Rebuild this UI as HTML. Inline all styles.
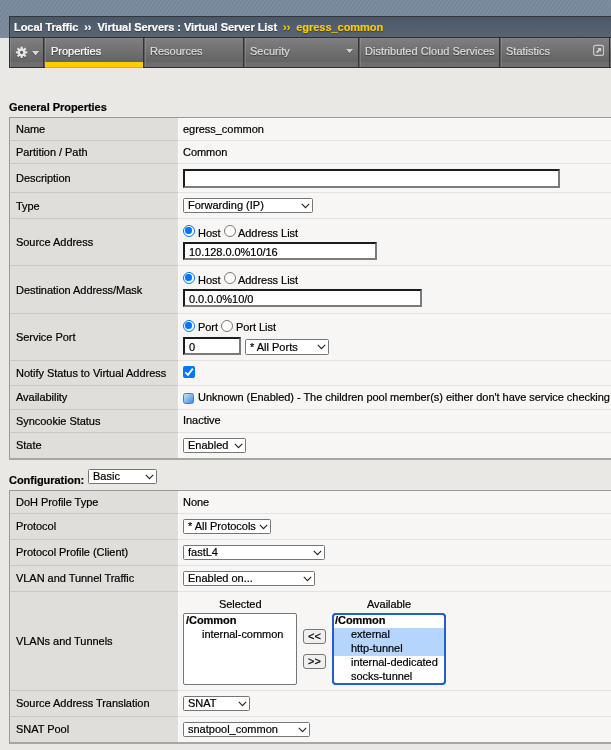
<!DOCTYPE html>
<html lang="en">
<head>
<meta charset="utf-8">
<title>Virtual Server Properties</title>
<style>
html,body{margin:0;padding:0;}
html{background:#e9e8e4;}
body{width:611px;height:750px;overflow:hidden;position:relative;will-change:transform;
  font-family:"Liberation Sans",Arial,Helvetica,sans-serif;font-size:11px;color:#000;line-height:13px;letter-spacing:-0.04px;-webkit-text-stroke:0.2px currentColor;}
*{box-sizing:border-box;}
.topband{position:absolute;left:0;top:0;width:611px;height:38px;
  background-color:#75869a;
  background-image:repeating-linear-gradient(124deg,rgba(255,255,255,0) 0,rgba(255,255,255,.075) 1.6px,rgba(255,255,255,0) 3.25px);}
.crumb{position:absolute;left:9px;top:16px;width:620px;height:22px;border:1px solid #33373c;border-bottom:none;
  background:linear-gradient(rgba(40,50,62,.58),rgba(40,50,62,.5) 40%,rgba(40,50,62,.44));color:#fff;font-weight:bold;white-space:nowrap;letter-spacing:-0.045px;
  padding:4px 0 0 4px;text-shadow:0 1px 1px rgba(0,0,0,.45);}
.crumb .sep{font-weight:bold;padding:0 3px;}
.crumb .cur{color:#ffcc00;}
.crumb .y{color:#ffcc00;}
.tabs{position:absolute;left:9px;top:37px;width:602px;height:31px;border:1px solid #2f2f2f;border-right:none;
  background:linear-gradient(#848484,#7e7e7e 1px,#636363 24.5px,#6e6e6e 24.5px,#6c6c6c);}
.tab{position:absolute;top:0;height:29px;color:#dcdcdc;padding-top:7px;white-space:nowrap;letter-spacing:0;
  border-left:1px solid #5c5c5c;border-right:1px solid #333;text-shadow:0 1px 1px rgba(0,0,0,.5);
  box-shadow:inset 1px 0 0 rgba(255,255,255,.13);
  background:linear-gradient(#848484,#7e7e7e 1px,#636363 24.5px,#6e6e6e 24.5px,#6c6c6c);}
.tab.on{color:#fff;}
.tab.on:after{content:"";position:absolute;left:0;right:0;bottom:-1px;height:6px;background:linear-gradient(#ffcc00,#ffcc00 5px,#d9ad00 5px);}
.hd{position:absolute;left:9px;font-weight:bold;white-space:nowrap;}
.tbl{position:absolute;left:9px;width:640px;border:1px solid #999;border-right:none;border-bottom:2px solid #a6a6a3;background:#f7f6f4;}
.row{position:relative;border-bottom:1px solid #d8d7d3;width:100%;}
.row:last-child{border-bottom:none;}
.lab{position:absolute;left:0;top:0;bottom:0;width:169px;background:#dfdeda;border-right:1px solid #fbfbfa;padding-left:6px;white-space:nowrap;}
.row .lab{border-bottom:0;}
.row{border-bottom-color:#e3e2df;}
.lab:after{content:"";position:absolute;left:0;right:0;bottom:-1px;height:1px;background:#c9c8c4;}
.row:last-child .lab:after{display:none;}
.t{position:absolute;white-space:nowrap;}
.inp{position:absolute;height:18px;background:#fff;border:2px solid;border-color:#1c1c1c #7b7b7b #7b7b7b #1c1c1c;padding:2px 0 0 4px;font-size:11px;line-height:13px;white-space:nowrap;}
.sel{position:absolute;height:15px;background:#fff;border:1px solid #767676;border-radius:1.5px;padding:0 0 0 4px;line-height:13px;white-space:nowrap;letter-spacing:0;}
.sel svg{position:absolute;right:2px;top:3.5px;}
.radio{position:absolute;width:12px;height:12px;border-radius:50%;border:1px solid #767676;background:#fff;}
.radio.on{border:1.5px solid #0075ff;}
.radio.on:after{content:"";position:absolute;left:1.25px;top:1.25px;width:6.5px;height:6.5px;border-radius:50%;background:#0075ff;}
.list{position:absolute;background:#fff;border:1px solid #767676;border-radius:2px;line-height:14px;white-space:nowrap;overflow:hidden;}
.list div{height:14px;line-height:12px;padding-left:18px;}
.list div.g{font-weight:bold;padding-left:2px;}
.list div.s{background:#b5d5fc;}
.btn{position:absolute;width:23px;height:15px;background:#efefef;border:1px solid #767676;border-radius:3px;text-align:center;line-height:13px;font-size:11px;}
</style>
</head>
<body>
<div class="topband"></div>
<div class="crumb">Local Traffic<span class="sep"> ›› </span>Virtual Servers : Virtual Server List<span class="sep y"> ›› </span><span class="cur">egress_common</span></div>
<div class="tabs">
  <div class="tab" style="left:0;width:34px;border-left:none;">
    <svg width="30" height="16" viewBox="0 0 30 16" style="position:absolute;left:4px;top:7px">
      <g transform="translate(7.6 8.3)" fill="rgba(0,0,0,.3)"><circle r="3.9"/><rect x="-1.1" y="-5.7" width="2.2" height="3" transform="rotate(0)"/><rect x="-1.1" y="-5.7" width="2.2" height="3" transform="rotate(45)"/><rect x="-1.1" y="-5.7" width="2.2" height="3" transform="rotate(90)"/><rect x="-1.1" y="-5.7" width="2.2" height="3" transform="rotate(135)"/><rect x="-1.1" y="-5.7" width="2.2" height="3" transform="rotate(180)"/><rect x="-1.1" y="-5.7" width="2.2" height="3" transform="rotate(225)"/><rect x="-1.1" y="-5.7" width="2.2" height="3" transform="rotate(270)"/><rect x="-1.1" y="-5.7" width="2.2" height="3" transform="rotate(315)"/></g>
      <g transform="translate(7.6 7.4)" fill="#e6e6e6"><circle r="3.9"/><rect x="-1.1" y="-5.7" width="2.2" height="3" transform="rotate(0)"/><rect x="-1.1" y="-5.7" width="2.2" height="3" transform="rotate(45)"/><rect x="-1.1" y="-5.7" width="2.2" height="3" transform="rotate(90)"/><rect x="-1.1" y="-5.7" width="2.2" height="3" transform="rotate(135)"/><rect x="-1.1" y="-5.7" width="2.2" height="3" transform="rotate(180)"/><rect x="-1.1" y="-5.7" width="2.2" height="3" transform="rotate(225)"/><rect x="-1.1" y="-5.7" width="2.2" height="3" transform="rotate(270)"/><rect x="-1.1" y="-5.7" width="2.2" height="3" transform="rotate(315)"/></g>
      <circle cx="7.6" cy="7.4" r="1.6" fill="#5f5f5f"/>
      <path d="M18 7 L25.2 7 L21.6 11.4 Z" fill="rgba(0,0,0,.3)"/>
      <path d="M18 6.1 L25.2 6.1 L21.6 10.6 Z" fill="#d9d9d9"/>
    </svg>
  </div>
  <div class="tab on" style="left:34px;width:100px;padding-left:6px;">Properties</div>
  <div class="tab" style="left:134px;width:100px;padding-left:5px;">Resources</div>
  <div class="tab" style="left:234px;width:115px;padding-left:5px;">Security
    <svg width="9" height="6" viewBox="0 0 9 6" style="position:absolute;left:100px;top:11px"><path d="M1 1 L8 1 L4.5 5.2 Z" fill="rgba(0,0,0,.3)"/><path d="M1 0 L8 0 L4.5 4.2 Z" fill="#d0d0d0"/></svg>
  </div>
  <div class="tab" style="left:349px;width:141px;padding-left:5px;">Distributed Cloud Services</div>
  <div class="tab" style="left:490px;width:110px;padding-left:5px;">Statistics
    <svg width="12" height="12" viewBox="0 0 12 12" style="position:absolute;left:91px;top:6px">
      <rect x="1.6" y="1.4" width="10" height="10" rx="2" fill="none" stroke="#c9c9c9" stroke-width="1.2"/>
      <path d="M5.4 3.9 H9.2 V7.7 L8 6.5 L5.3 9.2 L4.1 8 L6.8 5.3 Z" fill="#d6d6d6"/>
    </svg>
  </div>
</div>

<div class="hd" style="top:101px;">General Properties</div>
<div class="tbl" style="top:117px;">
  <div class="row" style="height:23px;"><div class="lab" style="padding-top:5px;">Name</div><div class="t" style="left:173px;top:5px;">egress_common</div></div>
  <div class="row" style="height:23px;"><div class="lab" style="padding-top:5px;">Partition / Path</div><div class="t" style="left:173px;top:5px;">Common</div></div>
  <div class="row" style="height:29px;"><div class="lab" style="padding-top:8px;">Description</div><div class="inp" style="left:173px;top:5px;width:377px;height:19px;"></div></div>
  <div class="row" style="height:26px;"><div class="lab" style="padding-top:7px;">Type</div>
    <div class="sel" style="left:173px;top:5px;width:130px;">Forwarding (IP)<svg width="9" height="6" viewBox="0 0 9 6"><path d="M0.8 0.9 L4.5 4.6 L8.2 0.9" fill="none" stroke="#222" stroke-width="1.1"/></svg></div></div>
  <div class="row" style="height:47px;"><div class="lab" style="padding-top:17px;">Source Address</div>
    <div class="radio on" style="left:173px;top:6px;"></div><div class="t" style="left:188px;top:8px;">Host</div>
    <div class="radio" style="left:214px;top:6px;"></div><div class="t" style="left:228px;top:8px;">Address List</div>
    <div class="inp" style="left:173px;top:23px;width:194px;">10.128.0.0%10/16</div></div>
  <div class="row" style="height:48px;"><div class="lab" style="padding-top:18px;">Destination Address/Mask</div>
    <div class="radio on" style="left:173px;top:6px;"></div><div class="t" style="left:188px;top:8px;">Host</div>
    <div class="radio" style="left:214px;top:6px;"></div><div class="t" style="left:228px;top:8px;">Address List</div>
    <div class="inp" style="left:173px;top:23px;width:239px;">0.0.0.0%10/0</div></div>
  <div class="row" style="height:47px;"><div class="lab" style="padding-top:17px;">Service Port</div>
    <div class="radio on" style="left:173px;top:6px;"></div><div class="t" style="left:188px;top:7px;">Port</div>
    <div class="radio" style="left:211px;top:6px;"></div><div class="t" style="left:226px;top:7px;">Port List</div>
    <div class="inp" style="left:173px;top:23px;width:58px;">0</div>
    <div class="sel" style="left:235px;top:25px;width:84px;height:16px;line-height:14px;">* All Ports<svg width="9" height="6" viewBox="0 0 9 6"><path d="M0.8 0.9 L4.5 4.6 L8.2 0.9" fill="none" stroke="#222" stroke-width="1.1"/></svg></div></div>
  <div class="row" style="height:25px;"><div class="lab" style="padding-top:6px;">Notify Status to Virtual Address</div>
    <div style="position:absolute;left:173px;top:5px;width:12px;height:12px;border-radius:2px;background:#0075ff;">
      <svg width="12" height="12" viewBox="0 0 12 12" style="position:absolute;left:0;top:0"><path d="M2.3 6.3 L5 8.9 L9.8 2.6" fill="none" stroke="#fff" stroke-width="1.8"/></svg></div></div>
  <div class="row" style="height:24px;"><div class="lab" style="padding-top:5px;">Availability</div>
    <div style="position:absolute;left:173px;top:7px;width:11px;height:11px;border-radius:2.5px;border:1px solid #2a82e2;background:linear-gradient(135deg,#c6ddf5 5%,#7fb2ec 55%,#3a8ae6);"></div>
    <div class="t" style="left:188px;top:5px;">Unknown (Enabled) - The children pool member(s) either don't have service checking enabled, or service check results are not available yet</div></div>
  <div class="row" style="height:23px;"><div class="lab" style="padding-top:5px;">Syncookie Status</div><div class="t" style="left:173px;top:4px;">Inactive</div></div>
  <div class="row" style="height:25px;"><div class="lab" style="padding-top:6px;">State</div>
    <div class="sel" style="left:173px;top:5px;width:63px;">Enabled<svg width="9" height="6" viewBox="0 0 9 6"><path d="M0.8 0.9 L4.5 4.6 L8.2 0.9" fill="none" stroke="#222" stroke-width="1.1"/></svg></div></div>
</div>

<div class="hd" style="top:474px;">Configuration:</div>
<div class="sel" style="left:88px;top:469px;width:69px;">Basic<svg width="9" height="6" viewBox="0 0 9 6"><path d="M0.8 0.9 L4.5 4.6 L8.2 0.9" fill="none" stroke="#222" stroke-width="1.1"/></svg></div>
<div class="tbl" style="top:490px;">
  <div class="row" style="height:23px;"><div class="lab" style="padding-top:5px;">DoH Profile Type</div><div class="t" style="left:173px;top:5px;">None</div></div>
  <div class="row" style="height:26px;"><div class="lab" style="padding-top:6px;">Protocol</div>
    <div class="sel" style="left:173px;top:5px;width:88px;">* All Protocols<svg width="9" height="6" viewBox="0 0 9 6"><path d="M0.8 0.9 L4.5 4.6 L8.2 0.9" fill="none" stroke="#222" stroke-width="1.1"/></svg></div></div>
  <div class="row" style="height:26px;"><div class="lab" style="padding-top:6px;">Protocol Profile (Client)</div>
    <div class="sel" style="left:173px;top:5px;width:142px;">fastL4<svg width="9" height="6" viewBox="0 0 9 6"><path d="M0.8 0.9 L4.5 4.6 L8.2 0.9" fill="none" stroke="#222" stroke-width="1.1"/></svg></div></div>
  <div class="row" style="height:26px;"><div class="lab" style="padding-top:6px;">VLAN and Tunnel Traffic</div>
    <div class="sel" style="left:173px;top:5px;width:132px;">Enabled on...<svg width="9" height="6" viewBox="0 0 9 6"><path d="M0.8 0.9 L4.5 4.6 L8.2 0.9" fill="none" stroke="#222" stroke-width="1.1"/></svg></div></div>
  <div class="row" style="height:99px;"><div class="lab" style="padding-top:43px;">VLANs and Tunnels</div>
    <div class="t" style="left:209px;top:6px;">Selected</div>
    <div class="t" style="left:357px;top:6px;">Available</div>
    <div class="list" style="left:173px;top:21px;width:114px;height:72px;"><div class="g">/Common</div><div>internal-common</div></div>
    <div class="btn" style="left:293px;top:37px;">&lt;&lt;</div>
    <div class="btn" style="left:293px;top:62px;">&gt;&gt;</div>
    <div class="list" style="left:322px;top:21px;width:114px;height:72px;border-color:#1f5fcf;border-radius:4px;"><div class="g">/Common</div><div class="s">external</div><div class="s">http-tunnel</div><div>internal-dedicated</div><div>socks-tunnel</div></div>
    <div style="position:absolute;left:322px;top:21px;width:114px;height:72px;border:2px solid #1f5fcf;border-radius:4px;"></div>
  </div>
  <div class="row" style="height:26px;"><div class="lab" style="padding-top:6px;">Source Address Translation</div>
    <div class="sel" style="left:173px;top:5px;width:67px;">SNAT<svg width="9" height="6" viewBox="0 0 9 6"><path d="M0.8 0.9 L4.5 4.6 L8.2 0.9" fill="none" stroke="#222" stroke-width="1.1"/></svg></div></div>
  <div class="row" style="height:25px;"><div class="lab" style="padding-top:6px;">SNAT Pool</div>
    <div class="sel" style="left:173px;top:5px;width:127px;">snatpool_common<svg width="9" height="6" viewBox="0 0 9 6"><path d="M0.8 0.9 L4.5 4.6 L8.2 0.9" fill="none" stroke="#222" stroke-width="1.1"/></svg></div></div>
</div>
</body>
</html>
